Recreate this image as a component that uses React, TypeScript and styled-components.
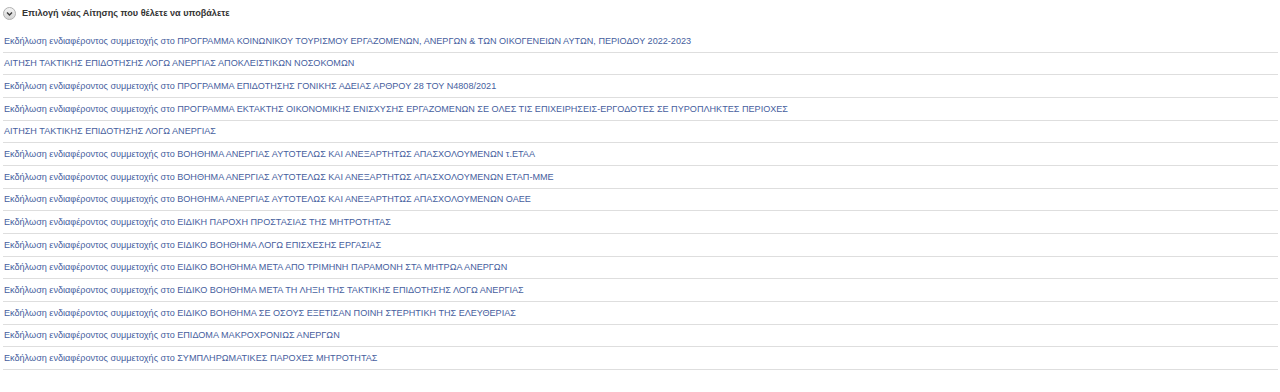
import * as React from 'react';
import styled, { createGlobalStyle } from 'styled-components';

const items: { prefix?: boolean; title: string }[] = [
  { prefix: true, title: 'ΠΡΟΓΡΑΜΜΑ ΚΟΙΝΩΝΙΚΟΥ ΤΟΥΡΙΣΜΟΥ ΕΡΓΑΖΟΜΕΝΩΝ, ΑΝΕΡΓΩΝ & ΤΩΝ ΟΙΚΟΓΕΝΕΙΩΝ ΑΥΤΩΝ, ΠΕΡΙΟΔΟΥ 2022-2023' },
  { title: 'ΑΙΤΗΣΗ ΤΑΚΤΙΚΗΣ ΕΠΙΔΟΤΗΣΗΣ ΛΟΓΩ ΑΝΕΡΓΙΑΣ ΑΠΟΚΛΕΙΣΤΙΚΩΝ ΝΟΣΟΚΟΜΩΝ' },
  { prefix: true, title: 'ΠΡΟΓΡΑΜΜΑ ΕΠΙΔΟΤΗΣΗΣ ΓΟΝΙΚΗΣ ΑΔΕΙΑΣ ΑΡΘΡΟΥ 28 ΤΟΥ Ν4808/2021' },
  { prefix: true, title: 'ΠΡΟΓΡΑΜΜΑ ΕΚΤΑΚΤΗΣ ΟΙΚΟΝΟΜΙΚΗΣ ΕΝΙΣΧΥΣΗΣ ΕΡΓΑΖΟΜΕΝΩΝ ΣΕ ΟΛΕΣ ΤΙΣ ΕΠΙΧΕΙΡΗΣΕΙΣ-ΕΡΓΟΔΟΤΕΣ ΣΕ ΠΥΡΟΠΛΗΚΤΕΣ ΠΕΡΙΟΧΕΣ' },
  { title: 'ΑΙΤΗΣΗ ΤΑΚΤΙΚΗΣ ΕΠΙΔΟΤΗΣΗΣ ΛΟΓΩ ΑΝΕΡΓΙΑΣ' },
  { prefix: true, title: 'ΒΟΗΘΗΜΑ ΑΝΕΡΓΙΑΣ ΑΥΤΟΤΕΛΩΣ ΚΑΙ ΑΝΕΞΑΡΤΗΤΩΣ ΑΠΑΣΧΟΛΟΥΜΕΝΩΝ τ.ΕΤΑΑ' },
  { prefix: true, title: 'ΒΟΗΘΗΜΑ ΑΝΕΡΓΙΑΣ ΑΥΤΟΤΕΛΩΣ ΚΑΙ ΑΝΕΞΑΡΤΗΤΩΣ ΑΠΑΣΧΟΛΟΥΜΕΝΩΝ ΕΤΑΠ-ΜΜΕ' },
  { prefix: true, title: 'ΒΟΗΘΗΜΑ ΑΝΕΡΓΙΑΣ ΑΥΤΟΤΕΛΩΣ ΚΑΙ ΑΝΕΞΑΡΤΗΤΩΣ ΑΠΑΣΧΟΛΟΥΜΕΝΩΝ ΟΑΕΕ' },
  { prefix: true, title: 'ΕΙΔΙΚΗ ΠΑΡΟΧΗ ΠΡΟΣΤΑΣΙΑΣ ΤΗΣ ΜΗΤΡΟΤΗΤΑΣ' },
  { prefix: true, title: 'ΕΙΔΙΚΟ ΒΟΗΘΗΜΑ ΛΟΓΩ ΕΠΙΣΧΕΣΗΣ ΕΡΓΑΣΙΑΣ' },
  { prefix: true, title: 'ΕΙΔΙΚΟ ΒΟΗΘΗΜΑ ΜΕΤΑ ΑΠΟ ΤΡΙΜΗΝΗ ΠΑΡΑΜΟΝΗ ΣΤΑ ΜΗΤΡΩΑ ΑΝΕΡΓΩΝ' },
  { prefix: true, title: 'ΕΙΔΙΚΟ ΒΟΗΘΗΜΑ ΜΕΤΑ ΤΗ ΛΗΞΗ ΤΗΣ ΤΑΚΤΙΚΗΣ ΕΠΙΔΟΤΗΣΗΣ ΛΟΓΩ ΑΝΕΡΓΙΑΣ' },
  { prefix: true, title: 'ΕΙΔΙΚΟ ΒΟΗΘΗΜΑ ΣΕ ΟΣΟΥΣ ΕΞΕΤΙΣΑΝ ΠΟΙΝΗ ΣΤΕΡΗΤΙΚΗ ΤΗΣ ΕΛΕΥΘΕΡΙΑΣ' },
  { prefix: true, title: 'ΕΠΙΔΟΜΑ ΜΑΚΡΟΧΡΟΝΙΩΣ ΑΝΕΡΓΩΝ' },
  { prefix: true, title: 'ΣΥΜΠΛΗΡΩΜΑΤΙΚΕΣ ΠΑΡΟΧΕΣ ΜΗΤΡΟΤΗΤΑΣ' },
];

const PREFIX = 'Εκδήλωση ενδιαφέροντος συμμετοχής στο ';

const Chevron = () => (
  <Circle>
    <svg width="13" height="13" viewBox="0 0 13 13">
      <defs>
        <linearGradient id="cg" x1="0" y1="0" x2="0" y2="1">
          <stop offset="0" stopColor="#f6f6f6" />
          <stop offset="1" stopColor="#d2d2d2" />
        </linearGradient>
      </defs>
      <circle cx="6.5" cy="6.5" r="6" fill="url(#cg)" stroke="#b0b0b0" />
      <path d="M4 5.4 L6.5 7.9 L9 5.4" fill="none" stroke="#3a3a3a" strokeWidth="1.4" />
    </svg>
  </Circle>
);

export default function App() {
  return (
    <>
      <GlobalStyle />
      <Page>
        <Header>
          <Chevron />
          <HeaderTitle>Επιλογή νέας Αίτησης που θέλετε να υποβάλετε</HeaderTitle>
        </Header>
        <List>
          {items.map((it, i) => (
            <Row key={i}>
              <Link href="#">{it.prefix ? PREFIX + it.title : it.title}</Link>
            </Row>
          ))}
        </List>
      </Page>
    </>
  );
}

// STYLED COMPONENTS

const GlobalStyle = createGlobalStyle`
  body {
    margin: 0;
    background: #fff;
    font-family: "Liberation Sans", Arial, sans-serif;
  }
`;

const Page = styled.div`
  padding: 0 2px 0 3px;
`;

const Header = styled.div`
  display: flex;
  align-items: center;
  gap: 6px;
  height: 30px;
  padding-bottom: 4px;
  box-sizing: border-box;
`;

const Circle = styled.span`
  display: inline-flex;
  width: 13px;
  height: 13px;
`;

const HeaderTitle = styled.span`
  font-size: 9.1px;
  font-weight: bold;
  color: #333;
`;

const List = styled.div`
  display: flex;
  flex-direction: column;
`;

const Row = styled.div`
  height: 22.67px;
  box-sizing: border-box;
  border-bottom: 1px solid #dedede;
  display: flex;
  align-items: center;
  padding-left: 1px;
`;

const Link = styled.a`
  font-size: 9.1px;
  color: #46609e;
  text-decoration: none;
  white-space: nowrap;
`;
